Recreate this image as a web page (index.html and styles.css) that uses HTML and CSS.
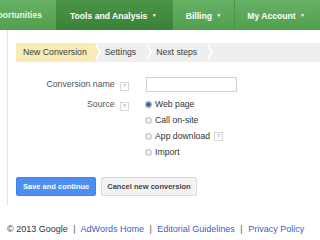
FILE: index.html
```html
<html>
  <head>
    <link rel="stylesheet" href="styles.css">
    <title>New Conversion</title>
  </head>
  <body>
    <div class="nav">
      <div class="tab first"><span>Opportunities</span></div>
      <div class="tab active">Tools and Analysis <span class="caret">&#9660;</span></div>
      <div class="tab">Billing <span class="caret">&#9660;</span></div>
      <div class="tab last">My Account <span class="caret">&#9660;</span></div>
    </div>
    <div class="page">
      <div class="steps">
        <div class="step current">New Conversion</div>
        <div class="step">Settings</div>
        <div class="step">Next steps</div>
        <div class="rest"></div>
      </div>
      <div class="form">
        <div class="row">
          <div class="label">Conversion name <span class="help">?</span></div>
          <div class="field"><input type="text" class="text"></div>
        </div>
        <div class="row source">
          <div class="label">Source <span class="help">?</span></div>
          <div class="field options">
            <label><span class="radio checked"></span>Web page</label>
            <label><span class="radio"></span>Call on-site</label>
            <label><span class="radio"></span>App download <span class="help">?</span></label>
            <label><span class="radio"></span>Import</label>
          </div>
        </div>
      </div>
      <div class="buttons">
        <button class="primary">Save and continue</button>
        <button class="secondary">Cancel new conversion</button>
      </div>
    </div>
    <div class="footer">
      &copy; 2013 Google <span class="sep">|</span> <a href="#">AdWords Home</a> <span class="sep">|</span> <a href="#">Editorial Guidelines</a> <span class="sep">|</span> <a href="#">Privacy Policy</a>
    </div>
  </body>
</html>
```

FILE: styles.css
```css
body {
  margin: 0;
  font-family: "Liberation Sans", Arial, sans-serif;
  font-size: 8.7px;
  color: #333;
  background: #fff;
  overflow: hidden;
}

/* top menu */
.nav {
  height: 30px;
  display: flex;
  background: linear-gradient(#66b063, #529f4f);
  white-space: nowrap;
}

.tab {
  color: #fff;
  font-weight: bold;
  font-size: 8.6px;
  line-height: 30px;
  padding: 0 13px;
  border-right: 1px solid #4d954a;
}

.tab.first {
  width: 42px;
  padding: 0 14px 0 0;
  display: flex;
  justify-content: flex-end;
  overflow: hidden;
  color: #eaf5e9;
  border-right: none;
}

.tab.active {
  background: linear-gradient(#4a9447, #3b8238);
  padding: 0 16px 0 14px;
  border-right: none;
}

.tab.last {
  padding-left: 12px;
  border-right: none;
}

.caret {
  font-size: 5px;
  vertical-align: 2px;
  margin-left: 2px;
}

/* content */
.page {
  margin-left: 7px;
  border-left: 1px solid #e3e3e3;
  padding: 13px 0 0 8px;
  height: 176px;
  box-sizing: border-box;
}

.steps {
  display: flex;
  height: 19px;
  background: #efefef;
  line-height: 19px;
}

.step {
  position: relative;
  padding: 0 9px 0 11px;
  color: #3c3c3c;
}

.step.current {
  background: #f8ebb8;
  padding: 0 7px 0 7px;
}

.step::after {
  content: "";
  position: absolute;
  right: -5px;
  top: 0;
  border-top: 9.5px solid transparent;
  border-bottom: 9.5px solid transparent;
  border-left: 5px solid #efefef;
  z-index: 2;
}

.step.current::after {
  border-left-color: #f8ebb8;
}

.step::before {
  content: "";
  position: absolute;
  right: -7px;
  top: 0;
  border-top: 9.5px solid transparent;
  border-bottom: 9.5px solid transparent;
  border-left: 5px solid #fff;
  z-index: 1;
}

.rest {
  flex: 1;
}

.form {
  padding-top: 15px;
}

.row {
  display: flex;
}

.row.source {
  margin-top: 4px;
}

.label {
  width: 113px;
  text-align: right;
  color: #555;
  padding-right: 17px;
  line-height: 15px;
}

.source .label {
  line-height: 16px;
}

.help {
  display: inline-block;
  box-sizing: border-box;
  width: 9px;
  height: 9px;
  border: 1px solid #d6d6d6;
  font-size: 6px;
  line-height: 7px;
  text-align: center;
  color: #aaa;
  margin-left: 3px;
  vertical-align: -1px;
}

.text {
  display: block;
  width: 91px;
  height: 15px;
  box-sizing: border-box;
  border: 1px solid #d0d0d0;
  margin: 0;
  padding: 0;
}

.options label {
  display: flex;
  align-items: center;
  height: 16px;
  color: #333;
}

.options .help {
  margin-left: 4px;
}

.radio {
  box-sizing: border-box;
  width: 7px;
  height: 7px;
  border: 1px solid #b8b8b8;
  border-radius: 50%;
  background: radial-gradient(circle, #f4f4f4 30%, #dcdcdc 100%);
  margin: 0 3px 0 -1px;
}

.radio.checked {
  background: radial-gradient(circle, #2f5e93 35%, #a9bdd6 75%);
  border-color: #7b95b6;
}

.buttons {
  display: flex;
  gap: 5px;
  margin-top: 17px;
}

button {
  font-family: "Liberation Sans", Arial, sans-serif;
  font-size: 7.5px;
  font-weight: bold;
  height: 19px;
  padding: 0 6px;
  border-radius: 2px;
}

.primary {
  background: #4d8ef4;
  border: 1px solid #4283ec;
  color: #fff;
}

.secondary {
  background: #f3f3f3;
  border: 1px solid #dadada;
  color: #444;
  padding: 0 5px;
}

.footer {
  padding: 18px 0 0 7px;
  color: #333;
  font-size: 9px;
  white-space: nowrap;
}

.footer a {
  color: #3b62c0;
  text-decoration: none;
}

.sep {
  color: #555;
  padding: 0 3px;
}
```
